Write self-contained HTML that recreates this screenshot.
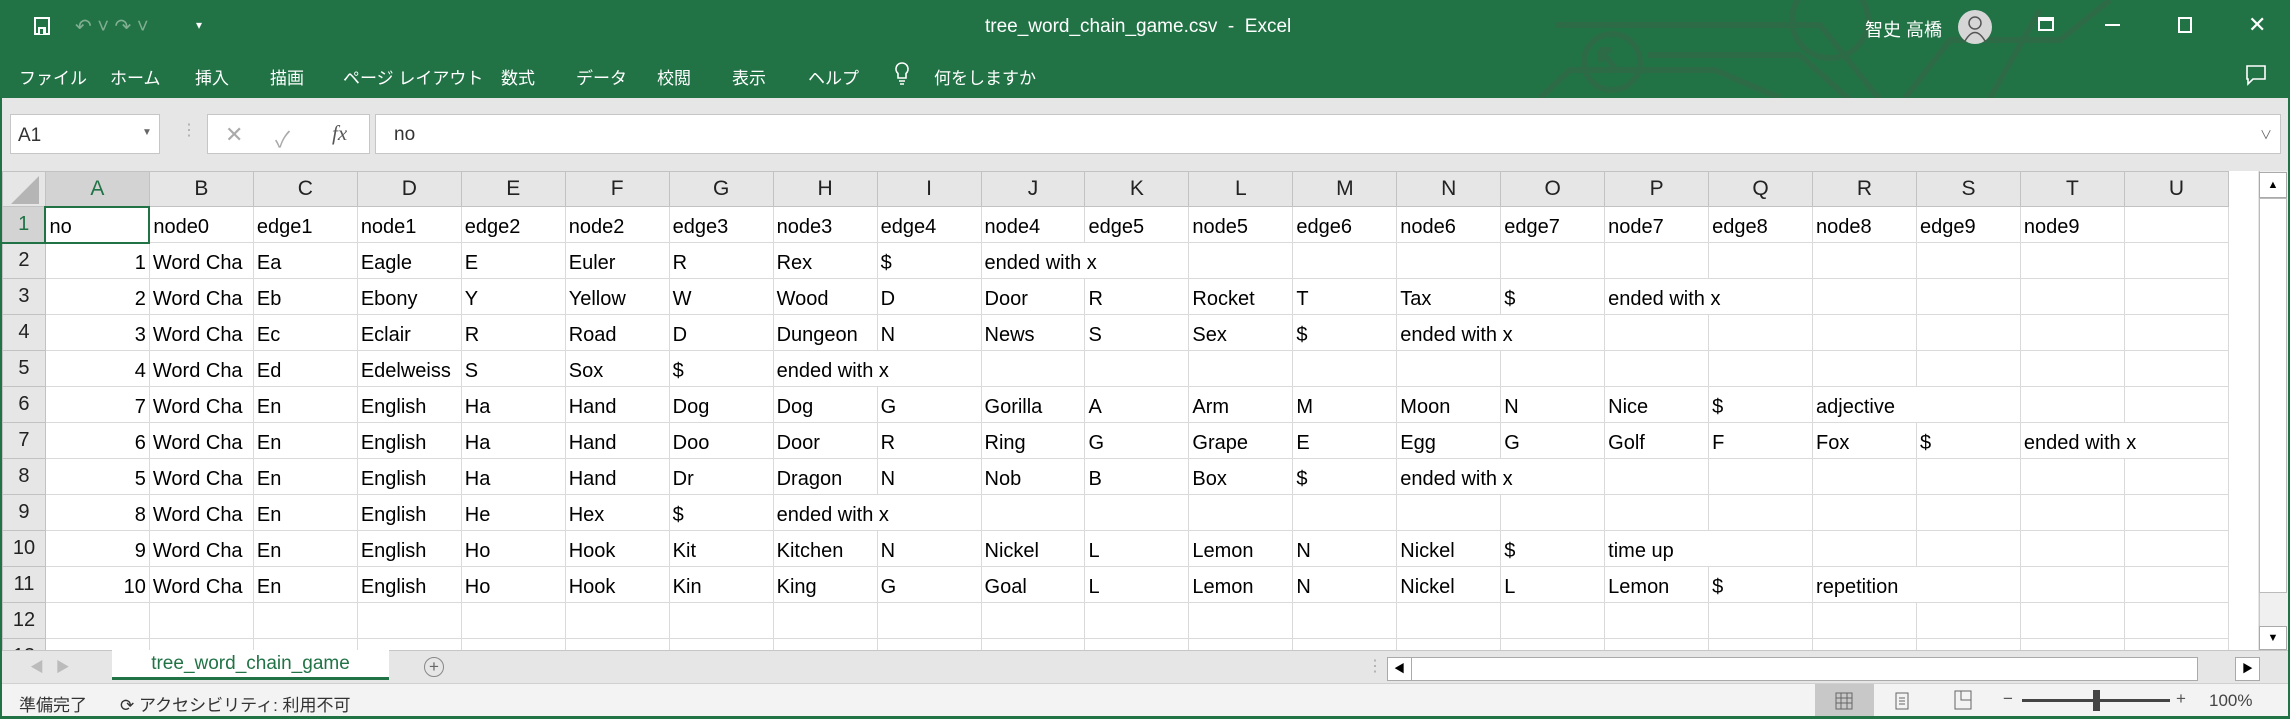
<!DOCTYPE html>
<html><head><meta charset="utf-8">
<style>
*{box-sizing:border-box;margin:0;padding:0}
body{width:2290px;height:719px;overflow:hidden;background:#fff;font-family:"Liberation Sans","Noto Sans CJK JP",sans-serif;position:relative}
.top{position:absolute;left:0;top:0;width:2290px;height:98px;background:#217346;overflow:hidden;color:#fff}
.t{position:absolute;white-space:nowrap}
.fbar{position:absolute;left:0;top:98px;width:2290px;height:73px;background:#e6e6e6}
.box{position:absolute;background:#fff;border:1px solid #c6c6c6}
.grid{position:absolute;left:2px;top:171px;width:2227px;height:479px;overflow:hidden;background:#fff}
table{border-collapse:collapse;table-layout:fixed;font-size:20px;color:#000}
td{height:36px;border:1px solid #dadada;white-space:nowrap;overflow:hidden;padding:0 3px;vertical-align:bottom;padding-bottom:3px}
td.r{text-align:right}
th{font-weight:normal;background:#e6e6e6;border:1px solid #c2c2c2;color:#222;font-size:21px}
tr.h th{height:35px}
th.rh{width:42px;text-align:center;font-size:20px}
.sel{background:#d3d3d3 !important;color:#217346 !important;border-bottom:2px solid #217346 !important}
.tabs{position:absolute;left:0;top:650px;width:2290px;height:33px;background:#e6e6e6;border-top:1px solid #c6c6c6}
.status{position:absolute;left:0;top:683px;width:2290px;height:33px;background:#f3f3f3;border-top:1px solid #d0d0d0;font-size:17px;color:#333}
</style></head><body>
<div class="top">
  <svg width="2290" height="98" style="position:absolute;left:0;top:0" fill="none" stroke="#2f6b47" stroke-width="6" opacity="0.9">
    <path d="M1555 25 H1820 L1880 100"/><path d="M1648 55 H1800 L1850 100"/>
    <path d="M1540 98 L1570 70 H1715 L1780 98"/>
    <circle cx="1612" cy="62" r="28"/><path d="M1600 50 L1618 72 M1600 50 H1612 M1600 50 V62"/>
    <circle cx="1830" cy="20" r="38"/>
    <path d="M1905 98 L1950 40 H2060 L2110 0"/><path d="M1990 98 L2040 10"/>
  </svg>
  <svg class="t" style="left:32px;top:16px" width="20" height="20" viewBox="0 0 20 20"><rect x="3" y="2" width="14" height="16" fill="none" stroke="#fff" stroke-width="2"/><rect x="6" y="11" width="8" height="7" fill="#fff"/><rect x="8" y="13" width="3" height="5" fill="#217346"/></svg>
  <div class="t" style="left:75px;top:14px;font-size:20px;color:#7fae90">↶ ˅ ↷ ˅</div>
  <div class="t" style="left:196px;top:18px;font-size:12px">▾</div>
  <div class="t" style="left:985px;top:16px;font-size:19px">tree_word_chain_game.csv&nbsp; - &nbsp;Excel</div>
  <div class="t" style="left:1865px;top:16px;font-size:18px">智史 高橋</div>
  <div class="t" style="left:1958px;top:10px;width:34px;height:34px;border-radius:50%;background:#d6d6d6"></div>
  <svg class="t" style="left:1963px;top:14px" width="24" height="28" viewBox="0 0 24 28" fill="none" stroke="#555" stroke-width="1.5"><circle cx="12" cy="9" r="6"/><path d="M2 27 Q12 10 22 27"/></svg>
  <div class="t" style="left:2038px;top:17px;width:16px;height:14px;border:2px solid #fff;border-top-width:4px"></div>
  <div class="t" style="left:2105px;top:24px;width:15px;height:2px;background:#fff"></div>
  <div class="t" style="left:2178px;top:17px;width:14px;height:16px;border:2px solid #fff"></div>
  <div class="t" style="left:2248px;top:12px;font-size:22px">✕</div>
  <div class="t" style="left:19px;top:64px;font-size:17px;word-spacing:0">ファイル</div>
  <div class="t" style="left:110px;top:64px;font-size:17px">ホーム</div>
  <div class="t" style="left:195px;top:64px;font-size:17px">挿入</div>
  <div class="t" style="left:270px;top:64px;font-size:17px">描画</div>
  <div class="t" style="left:343px;top:64px;font-size:17px">ページ レイアウト</div>
  <div class="t" style="left:501px;top:64px;font-size:17px">数式</div>
  <div class="t" style="left:576px;top:64px;font-size:17px">データ</div>
  <div class="t" style="left:657px;top:64px;font-size:17px">校閲</div>
  <div class="t" style="left:732px;top:64px;font-size:17px">表示</div>
  <div class="t" style="left:808px;top:64px;font-size:17px">ヘルプ</div>
  <svg class="t" style="left:894px;top:61px" width="16" height="26" viewBox="0 0 16 26" fill="none" stroke="#fff" stroke-width="1.6"><path d="M8 2a6 6 0 0 0-4 10.5V17h8v-4.5A6 6 0 0 0 8 2zM5 20h6M6 23h4"/></svg>
  <div class="t" style="left:934px;top:64px;font-size:17px">何をしますか</div>
  <svg class="t" style="left:2245px;top:64px" width="22" height="22" viewBox="0 0 22 22" fill="none" stroke="#fff" stroke-width="1.6"><path d="M2 2h18v13H8l-5 5v-5H2z"/></svg>
</div>
<div class="fbar">
  <div class="box" style="left:10px;top:16px;width:150px;height:40px"><span class="t" style="left:7px;top:10px;font-size:19px;color:#333">A1</span><span class="t" style="left:131px;top:12px;font-size:10px;color:#666">▼</span></div>
  <div class="t" style="left:181px;top:22px;color:#aaa;font-size:16px">⋮</div>
  <div class="box" style="left:207px;top:16px;width:163px;height:40px"><span class="t" style="left:17px;top:7px;font-size:22px;color:#aaa">✕</span><span class="t" style="left:67px;top:7px;font-size:22px;color:#aaa">✓</span><span class="t" style="left:124px;top:6px;font-size:21px;color:#555;font-style:italic;font-family:'Liberation Serif',serif">fx</span></div>
  <div class="box" style="left:375px;top:16px;width:1906px;height:40px"><span class="t" style="left:18px;top:9px;font-size:19px;color:#333">no</span><span class="t" style="left:1884px;top:11px;font-size:12px;color:#666">∨</span></div>
</div>
<div class="grid">
<table>
<colgroup><col style="width:43px"><col span="21" style="width:104px"></colgroup>
<tr class="h"><th style="background:#e6e6e6"><svg width="40" height="34" style="display:block"><path d="M36 4 V32 H8 Z" fill="#b5b5b5"/></svg></th><th class="sel">A</th><th>B</th><th>C</th><th>D</th><th>E</th><th>F</th><th>G</th><th>H</th><th>I</th><th>J</th><th>K</th><th>L</th><th>M</th><th>N</th><th>O</th><th>P</th><th>Q</th><th>R</th><th>S</th><th>T</th><th>U</th></tr>
<tr><th class="rh sel">1</th><td style="border:2px solid #217346">no</td><td>node0</td><td>edge1</td><td>node1</td><td>edge2</td><td>node2</td><td>edge3</td><td>node3</td><td>edge4</td><td>node4</td><td>edge5</td><td>node5</td><td>edge6</td><td>node6</td><td>edge7</td><td>node7</td><td>edge8</td><td>node8</td><td>edge9</td><td>node9</td><td></td></tr>
<tr><th class="rh">2</th><td class="r">1</td><td>Word Cha</td><td>Ea</td><td>Eagle</td><td>E</td><td>Euler</td><td>R</td><td>Rex</td><td>$</td><td colspan="2">ended with x</td><td></td><td></td><td></td><td></td><td></td><td></td><td></td><td></td><td></td><td></td></tr>
<tr><th class="rh">3</th><td class="r">2</td><td>Word Cha</td><td>Eb</td><td>Ebony</td><td>Y</td><td>Yellow</td><td>W</td><td>Wood</td><td>D</td><td>Door</td><td>R</td><td>Rocket</td><td>T</td><td>Tax</td><td>$</td><td colspan="2">ended with x</td><td></td><td></td><td></td><td></td></tr>
<tr><th class="rh">4</th><td class="r">3</td><td>Word Cha</td><td>Ec</td><td>Eclair</td><td>R</td><td>Road</td><td>D</td><td>Dungeon</td><td>N</td><td>News</td><td>S</td><td>Sex</td><td>$</td><td colspan="2">ended with x</td><td></td><td></td><td></td><td></td><td></td><td></td></tr>
<tr><th class="rh">5</th><td class="r">4</td><td>Word Cha</td><td>Ed</td><td>Edelweiss</td><td>S</td><td>Sox</td><td>$</td><td colspan="2">ended with x</td><td></td><td></td><td></td><td></td><td></td><td></td><td></td><td></td><td></td><td></td><td></td><td></td></tr>
<tr><th class="rh">6</th><td class="r">7</td><td>Word Cha</td><td>En</td><td>English</td><td>Ha</td><td>Hand</td><td>Dog</td><td>Dog</td><td>G</td><td>Gorilla</td><td>A</td><td>Arm</td><td>M</td><td>Moon</td><td>N</td><td>Nice</td><td>$</td><td colspan="2">adjective</td><td></td><td></td></tr>
<tr><th class="rh">7</th><td class="r">6</td><td>Word Cha</td><td>En</td><td>English</td><td>Ha</td><td>Hand</td><td>Doo</td><td>Door</td><td>R</td><td>Ring</td><td>G</td><td>Grape</td><td>E</td><td>Egg</td><td>G</td><td>Golf</td><td>F</td><td>Fox</td><td>$</td><td colspan="2">ended with x</td></tr>
<tr><th class="rh">8</th><td class="r">5</td><td>Word Cha</td><td>En</td><td>English</td><td>Ha</td><td>Hand</td><td>Dr</td><td>Dragon</td><td>N</td><td>Nob</td><td>B</td><td>Box</td><td>$</td><td colspan="2">ended with x</td><td></td><td></td><td></td><td></td><td></td><td></td></tr>
<tr><th class="rh">9</th><td class="r">8</td><td>Word Cha</td><td>En</td><td>English</td><td>He</td><td>Hex</td><td>$</td><td colspan="2">ended with x</td><td></td><td></td><td></td><td></td><td></td><td></td><td></td><td></td><td></td><td></td><td></td><td></td></tr>
<tr><th class="rh">10</th><td class="r">9</td><td>Word Cha</td><td>En</td><td>English</td><td>Ho</td><td>Hook</td><td>Kit</td><td>Kitchen</td><td>N</td><td>Nickel</td><td>L</td><td>Lemon</td><td>N</td><td>Nickel</td><td>$</td><td colspan="2">time up</td><td></td><td></td><td></td><td></td></tr>
<tr><th class="rh">11</th><td class="r">10</td><td>Word Cha</td><td>En</td><td>English</td><td>Ho</td><td>Hook</td><td>Kin</td><td>King</td><td>G</td><td>Goal</td><td>L</td><td>Lemon</td><td>N</td><td>Nickel</td><td>L</td><td>Lemon</td><td>$</td><td colspan="2">repetition</td><td></td><td></td></tr>
<tr><th class="rh">12</th><td></td><td></td><td></td><td></td><td></td><td></td><td></td><td></td><td></td><td></td><td></td><td></td><td></td><td></td><td></td><td></td><td></td><td></td><td></td><td></td><td></td></tr>
<tr><th class="rh">13</th><td></td><td></td><td></td><td></td><td></td><td></td><td></td><td></td><td></td><td></td><td></td><td></td><td></td><td></td><td></td><td></td><td></td><td></td><td></td><td></td><td></td></tr>
</table>
</div>
<div style="position:absolute;left:2229px;top:171px;width:61px;height:479px;background:#fff"></div>
<div style="position:absolute;left:2258px;top:171px;width:32px;height:479px;background:#e6e6e6"></div>
<div style="position:absolute;left:2259px;top:171px;width:29px;height:479px;background:#f0f0f0;border-left:1px solid #c6c6c6"></div>
<div style="position:absolute;left:2259px;top:172px;width:28px;height:26px;background:#fff;border:1px solid #aaa;font-size:11px;text-align:center;line-height:24px">▲</div>
<div style="position:absolute;left:2259px;top:198px;width:28px;height:395px;background:#fff;border:1px solid #bbb"></div>
<div style="position:absolute;left:2259px;top:626px;width:28px;height:24px;background:#fff;border:1px solid #aaa;font-size:11px;text-align:center;line-height:22px">▼</div>
<div class="tabs">
  <div class="t" style="left:30px;top:6px;color:#bbb;font-size:14px">◀ &nbsp; ▶</div>
  <div class="t" style="left:112px;top:-1px;width:277px;height:30px;background:#fff;border-bottom:3px solid #217346;color:#217346;font-size:19px;text-align:center;line-height:27px">tree_word_chain_game</div>
  <div class="t" style="left:424px;top:6px;width:20px;height:20px;border:1px solid #888;border-radius:50%;color:#666;font-size:17px;line-height:17px;text-align:center">+</div>
  <div class="t" style="left:1367px;top:5px;color:#aaa;font-size:16px">⋮</div>
  <div class="t" style="left:1387px;top:6px;width:811px;height:24px;background:#fff;border:1px solid #aaa"></div>
  <div class="t" style="left:1387px;top:6px;width:25px;height:24px;border:1px solid #aaa;font-size:11px;line-height:22px;text-align:center">◀</div>
  <div class="t" style="left:2235px;top:6px;width:25px;height:24px;background:#fff;border:1px solid #aaa;font-size:11px;line-height:22px;text-align:center">▶</div>
</div>
<div class="status">
  <div class="t" style="left:19px;top:7px">準備完了</div>
  <div class="t" style="left:120px;top:7px">⟳ アクセシビリティ: 利用不可</div>
  <div class="t" style="left:1815px;top:0;width:59px;height:33px;background:#c8c8c8"></div>
  <svg class="t" style="left:1835px;top:8px" width="18" height="18"><rect x="1" y="1" width="16" height="16" fill="none" stroke="#666"/><path d="M1 6H17M1 11H17M6 1V17M12 1V17" stroke="#666"/></svg>
  <svg class="t" style="left:1895px;top:8px" width="14" height="18"><rect x="1" y="1" width="12" height="16" fill="none" stroke="#666"/><path d="M4 6H10M4 9H10M4 12H10" stroke="#666"/></svg>
  <svg class="t" style="left:1954px;top:6px" width="18" height="20"><rect x="1" y="1" width="16" height="18" fill="none" stroke="#666"/><path d="M7 1V10H17" fill="none" stroke="#666"/></svg>
  <div class="t" style="left:2003px;top:5px;color:#555">−</div>
  <div class="t" style="left:2022px;top:15px;width:148px;height:3px;background:#444"></div>
  <div class="t" style="left:2093px;top:6px;width:7px;height:21px;background:#444"></div>
  <div class="t" style="left:2176px;top:5px;color:#555">+</div>
  <div class="t" style="left:2209px;top:7px;color:#444">100%</div>
</div>
<div style="position:absolute;left:0;top:716px;width:2290px;height:3px;background:#217346"></div>
<div style="position:absolute;left:2288px;top:98px;width:2px;height:621px;background:#217346"></div>
<div style="position:absolute;left:0;top:98px;width:2px;height:621px;background:#217346"></div>
</body></html>
